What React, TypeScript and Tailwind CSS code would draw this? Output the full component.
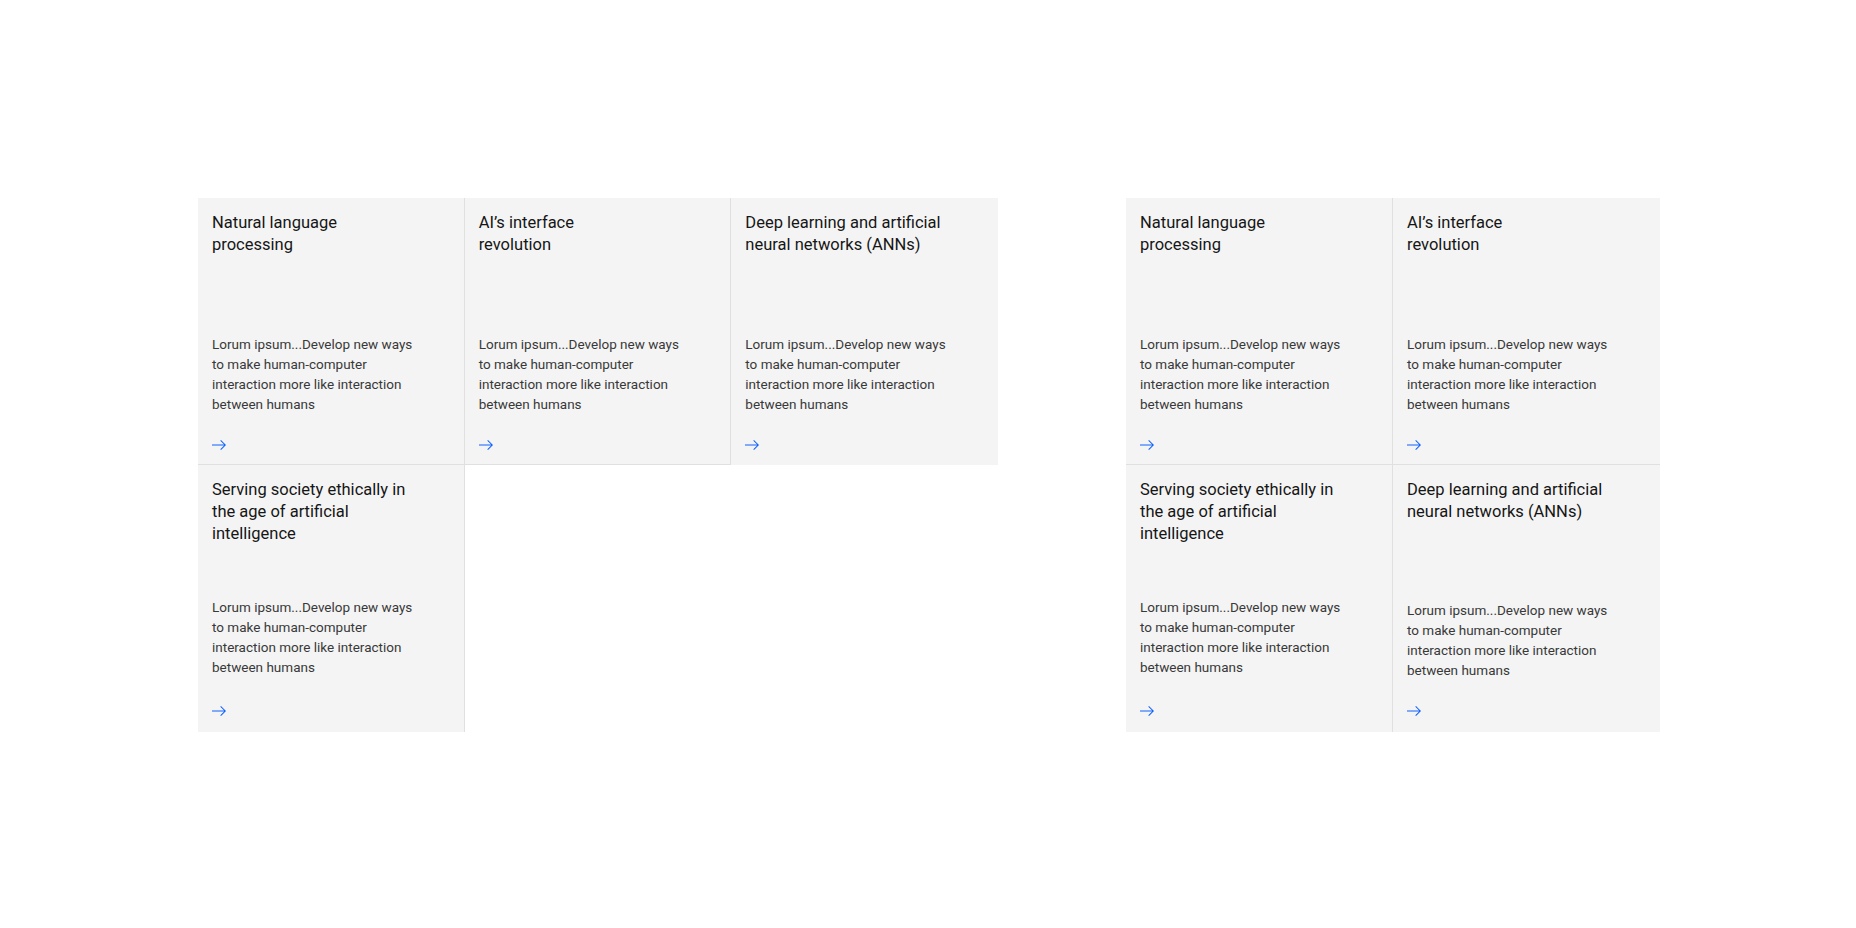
import React from 'react';

type Card = {
    title: string[];
    borders: string;
    arrowGap?: string;
};

const body = 'Lorum ipsum...Develop new ways to make human-computer interaction more like interaction between humans';

function ArrowRight({ gap }: { gap: string }) {
    return (
        <svg viewBox="0 0 16 16" className={`w-4 h-4 -ml-px shrink-0 ${gap}`} fill="#0f62fe">
            <path d="M9.3 3.7L13.1 7.5 1 7.5 1 8.5 13.1 8.5 9.3 12.3 10 13 15 8 10 3z" />
        </svg>
    );
}

function Tile({ card }: { card: Card }) {
    return (
        <div className={`flex flex-col h-[267px] bg-[#f4f4f4] border-[#e0e0e0] pt-[14px] px-[14px] ${card.borders}`}>
            <h3 className="text-[16.5px] leading-[22px] text-[#161616] font-normal">
                {card.title.map((line, i) => (
                    <span key={i} className="block">{line}</span>
                ))}
            </h3>
            <p className="mt-auto max-w-[206px] text-[13.5px] leading-[20px] text-[#393939]">{body}</p>
            <ArrowRight gap={card.arrowGap ?? 'mt-[23px]'} />
        </div>
    );
}

const nlp = ['Natural language', 'processing'];
const ai = ['AI’s interface', 'revolution'];
const deep = ['Deep learning and artificial', 'neural networks (ANNs)'];
const ethics = ['Serving society ethically in', 'the age of artificial', 'intelligence'];

const leftCards: Card[] = [
    { title: nlp, borders: 'border-r border-b pb-[11px]' },
    { title: ai, borders: 'border-r border-b pb-[11px]' },
    { title: deep, borders: 'pb-[12px]' },
    { title: ethics, borders: 'border-r pb-[13px]', arrowGap: 'mt-[26px]' },
];

const rightCards: Card[] = [
    { title: nlp, borders: 'border-r border-b pb-[11px]' },
    { title: ai, borders: 'border-b pb-[11px]' },
    { title: ethics, borders: 'border-r pb-[13px]', arrowGap: 'mt-[26px]' },
    { title: deep, borders: 'pb-[13px]' },
];

export default function App() {
    return (
        <div className="min-h-screen w-full bg-white flex items-start pl-[198px] pt-[198px] gap-[128px] font-['Roboto',sans-serif]">
            <div className="grid grid-cols-3 w-[800px]">
                {leftCards.map((c, i) => (
                    <Tile key={i} card={c} />
                ))}
            </div>
            <div className="grid grid-cols-2 w-[534px]">
                {rightCards.map((c, i) => (
                    <Tile key={i} card={c} />
                ))}
            </div>
        </div>
    );
}
